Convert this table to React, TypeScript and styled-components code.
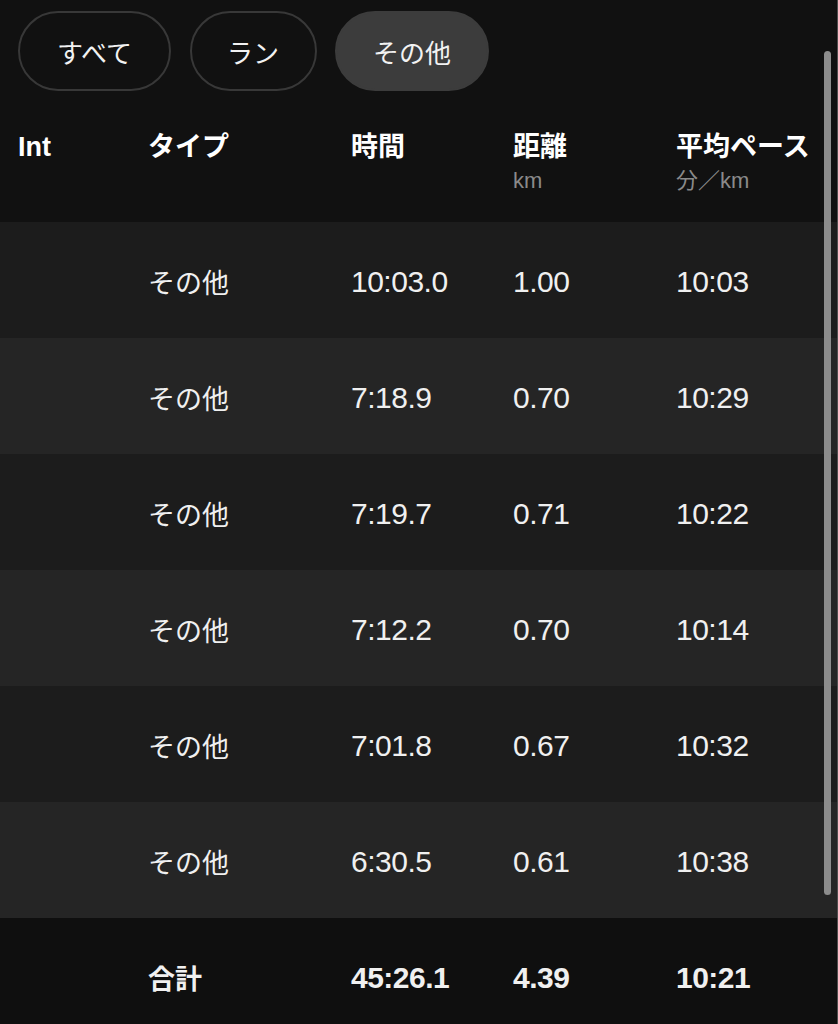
import React from "react";
import styled, { createGlobalStyle } from "styled-components";

const GlobalStyle = createGlobalStyle`
  html, body {
    margin: 0;
    padding: 0;
    background: #111111;
  }
  body {
    font-family: "Liberation Sans", "Noto Sans CJK JP", sans-serif;
    color: #ffffff;
  }
`;

const Page = styled.div`
  position: relative;
  width: 838px;
  height: 1024px;
  box-sizing: border-box;
  background: #111111;
  border-right: 1px solid #4e4e4e;
  overflow: hidden;
  display: flex;
  flex-direction: column;
`;

const FilterBar = styled.div`
  display: flex;
  gap: 18.5px;
  padding: 11px 18px 17px;
`;

const Pill = styled.button<{ $active?: boolean; $w: number }>`
  width: ${(p) => p.$w}px;
  height: 80px;
  box-sizing: border-box;
  padding: 0;
  border-radius: 40px;
  border: 2px solid ${(p) => (p.$active ? "#3c3c3c" : "#383838")};
  background: ${(p) => (p.$active ? "#3c3c3c" : "transparent")};
  color: #f2f2f2;
  font-family: "Noto Sans CJK JP", sans-serif;
  font-size: 26px;
  font-weight: 400;
  display: flex;
  align-items: center;
  justify-content: center;
`;

const Grid = styled.div`
  display: grid;
  grid-template-columns: 130px 203px 162px 163px 1fr;
  padding-left: 18px;
  box-sizing: border-box;
`;

const HeaderRow = styled(Grid)`
  height: 114px;
  padding-top: 23px;
  align-items: start;
`;

const HeadCell = styled.div`
  display: flex;
  flex-direction: column;
  gap: 5px;
`;

const HeadLabel = styled.span`
  font-size: 27px;
  line-height: 32px;
  font-weight: 700;
  color: #ffffff;
  white-space: nowrap;
`;

const HeadUnit = styled.span`
  font-size: 22px;
  line-height: 26px;
  color: #8a8a8a;
  white-space: nowrap;
`;

const DataRow = styled(Grid)<{ $alt: boolean }>`
  height: 116px;
  align-items: center;
  background: ${(p) => (p.$alt ? "#252525" : "#1c1c1c")};
`;

const TotalRow = styled(Grid)`
  height: 106px;
  align-items: center;
  background: #0f0f0f;
  padding-top: 10px;
  box-sizing: border-box;
`;

const TypeText = styled.span<{ $bold?: boolean }>`
  font-family: "Noto Sans CJK JP", sans-serif;
  font-size: 27px;
  font-weight: ${(p) => (p.$bold ? 700 : 400)};
  color: #f0f0f0;
  white-space: nowrap;
`;

const NumText = styled.span<{ $bold?: boolean }>`
  font-family: "Liberation Sans", sans-serif;
  font-size: 30px;
  letter-spacing: -0.5px;
  font-weight: ${(p) => (p.$bold ? 700 : 400)};
  color: #f0f0f0;
  white-space: nowrap;
`;

const Cell = styled.div`
  padding-top: 3px;
`;

const ScrollThumb = styled.div`
  position: absolute;
  left: 824px;
  top: 51px;
  width: 7px;
  height: 844px;
  border-radius: 4px;
  background: #8c8c8c;
`;

const rows = [
  ["10:03.0", "1.00", "10:03"],
  ["7:18.9", "0.70", "10:29"],
  ["7:19.7", "0.71", "10:22"],
  ["7:12.2", "0.70", "10:14"],
  ["7:01.8", "0.67", "10:32"],
  ["6:30.5", "0.61", "10:38"],
];

export default function App() {
  return (
    <>
      <GlobalStyle />
      <Page>
        <FilterBar>
          <Pill $w={153}>すべて</Pill>
          <Pill $w={127}>ラン</Pill>
          <Pill $w={154} $active>
            その他
          </Pill>
        </FilterBar>
        <HeaderRow>
          <HeadCell>
            <HeadLabel>Int</HeadLabel>
          </HeadCell>
          <HeadCell>
            <HeadLabel>タイプ</HeadLabel>
          </HeadCell>
          <HeadCell>
            <HeadLabel>時間</HeadLabel>
          </HeadCell>
          <HeadCell>
            <HeadLabel>距離</HeadLabel>
            <HeadUnit>km</HeadUnit>
          </HeadCell>
          <HeadCell>
            <HeadLabel>平均ペース</HeadLabel>
            <HeadUnit>分／km</HeadUnit>
          </HeadCell>
        </HeaderRow>
        {rows.map((r, i) => (
          <DataRow key={i} $alt={i % 2 === 1}>
            <Cell />
            <Cell>
              <TypeText>その他</TypeText>
            </Cell>
            <Cell>
              <NumText>{r[0]}</NumText>
            </Cell>
            <Cell>
              <NumText>{r[1]}</NumText>
            </Cell>
            <Cell>
              <NumText>{r[2]}</NumText>
            </Cell>
          </DataRow>
        ))}
        <TotalRow>
          <Cell />
          <Cell>
            <TypeText $bold>合計</TypeText>
          </Cell>
          <Cell>
            <NumText $bold>45:26.1</NumText>
          </Cell>
          <Cell>
            <NumText $bold>4.39</NumText>
          </Cell>
          <Cell>
            <NumText $bold>10:21</NumText>
          </Cell>
        </TotalRow>
        <ScrollThumb />
      </Page>
    </>
  );
}
